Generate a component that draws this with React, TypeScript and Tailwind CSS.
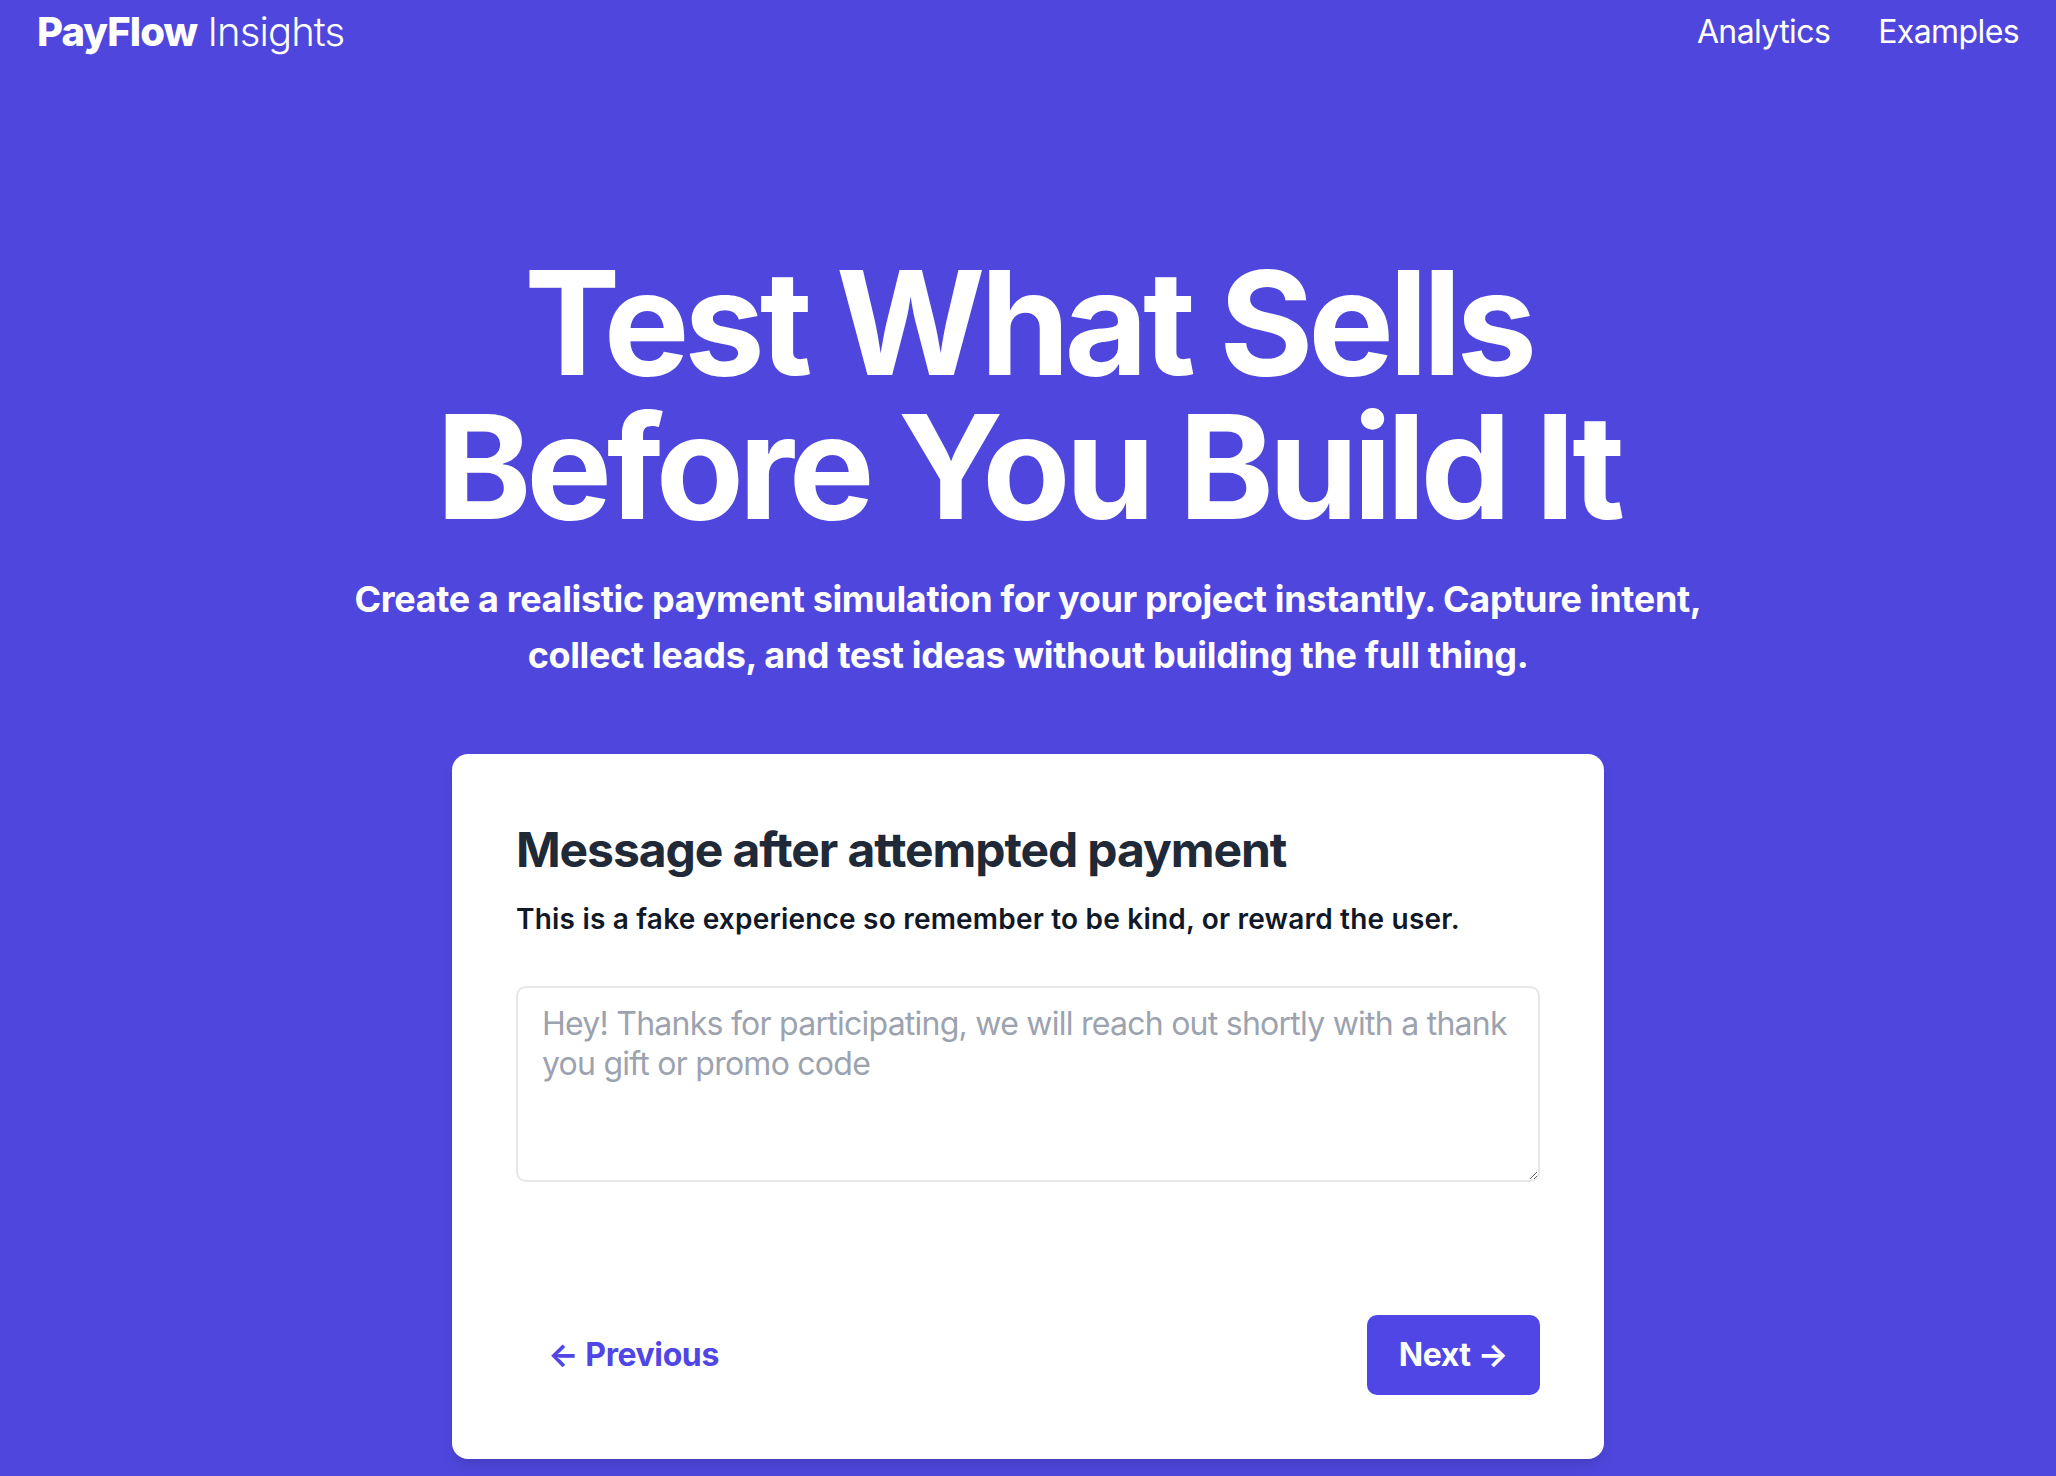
const font = { fontFamily: "Inter, 'Noto Sans', sans-serif" };

const Header = () => (
  <header className="flex items-center justify-between px-[37px] pt-[7px] h-[57px]">
    <a className="text-[40px] leading-[50px] text-white tracking-[-0.9px]">
      <span className="font-extrabold">PayFlow</span>{" "}
      <span className="font-light">Insights</span>
    </a>
    <nav className="flex gap-[48px] text-[32px] leading-[50px] text-white tracking-[-0.6px]">
      <a>Analytics</a>
      <a>Examples</a>
    </nav>
  </header>
);

const MessageCard = () => (
  <div className="mx-auto w-[1152px] rounded-[16px] bg-white p-[64px] shadow-lg">
    <h2 className="text-[48px] leading-[64px] font-bold tracking-[-1.1px] text-[#1f2937]">
      Message after attempted payment
    </h2>
    <p className="mt-[17px] text-[28px] leading-[40px] font-semibold tracking-[0.2px] text-[#111827]">
      This is a fake experience so remember to be kind, or reward the user.
    </p>
    <textarea
      rows={4}
      className="mt-[47px] block w-full rounded-[10px] border-2 border-[#e5e7eb] px-[24px] py-[16px] text-[32px] leading-[40px] tracking-[-0.75px] text-[#111827] placeholder:text-[#9ca3af] outline-none"
      placeholder={"Hey! Thanks for participating, we will reach out shortly with a thank\nyou gift or promo code"}
    />
    <div className="mt-[133px] flex items-center justify-between">
      <button className="h-[80px] px-[32px] text-[32px] font-bold tracking-[-0.4px] text-[#4f46e5]">
        ← Previous
      </button>
      <button className="h-[80px] rounded-[10px] bg-[#4f46e5] px-[32px] text-[32px] font-bold tracking-[-0.4px] text-white">
        Next →
      </button>
    </div>
  </div>
);

export default function App() {
  return (
    <div className="min-h-[1476px] bg-[#4f47dd]" style={font}>
      <Header />
      <section className="mt-[194px] text-center text-white">
        <h1 className="text-[144px] leading-[144px] font-bold tracking-[-5.25px]">
          Test What Sells
          <br />
          Before You Build It
        </h1>
        <p className="mt-[32px] text-[36px] leading-[56px] font-bold tracking-[-0.35px]">
          Create a realistic payment simulation for your project instantly. Capture intent,
          <br />
          collect leads, and test ideas without building the full thing.
        </p>
      </section>
      <div className="mt-[71px] pb-[40px]">
        <MessageCard />
      </div>
    </div>
  );
}
